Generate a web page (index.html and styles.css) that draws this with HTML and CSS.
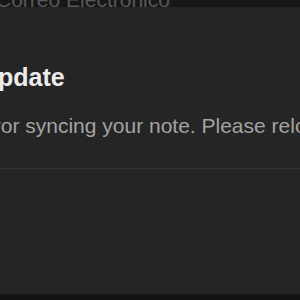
FILE: index.html
```html
<!DOCTYPE html>
<html lang="es">
<head>
<meta charset="utf-8">
<link rel="stylesheet" href="styles.css">
</head>
<body>
<div class="screen">
  <div class="field-strip">
    <span class="field-label">Correo Electrónico</span>
  </div>
  <section class="dialog">
    <div class="dialog-body">
      <h2 class="dialog-title">Update</h2>
      <p class="dialog-text">There was an error syncing your note. Please reload the page.</p>
    </div>
    <div class="dialog-footer"></div>
  </section>
</div>
</body>
</html>
```
FILE: styles.css
```css
* { box-sizing: border-box; }
html, body {
  margin: 0;
  padding: 0;
  width: 300px;
  height: 300px;
  overflow: hidden;
  background: #111111;
}
.screen {
  width: 300px;
  height: 300px;
  display: flex;
  flex-direction: column;
  font-family: "Liberation Sans", Arial, sans-serif;
}
.field-strip {
  height: 7px;
  flex: none;
  background: #171717;
  overflow: hidden;
  display: flex;
  align-items: flex-end;
}
.field-label {
  display: block;
  margin-left: -4px;
  margin-bottom: -5px;
  font-size: 21px;
  line-height: 24px;
  color: #585858;
  white-space: nowrap;
}
.dialog {
  height: 290px;
  flex: none;
  background: #252525;
  border-bottom: 3px solid #141414;
  display: flex;
  flex-direction: column;
  overflow: hidden;
}
.dialog-body {
  padding-top: 53px;
  height: 162px;
  border-bottom: 1px solid #343434;
  flex: none;
}
.dialog-title {
  margin: 0 0 0 -20px;
  font-size: 25px;
  line-height: 34px;
  font-weight: 700;
  color: #ececec;
  white-space: nowrap;
}
.dialog-text {
  margin: 19px 0 0 -158px;
  font-size: 21px;
  line-height: 26px;
  color: #a3a3a3;
  white-space: nowrap;
}
.dialog-footer {
  flex: 1;
}
```
